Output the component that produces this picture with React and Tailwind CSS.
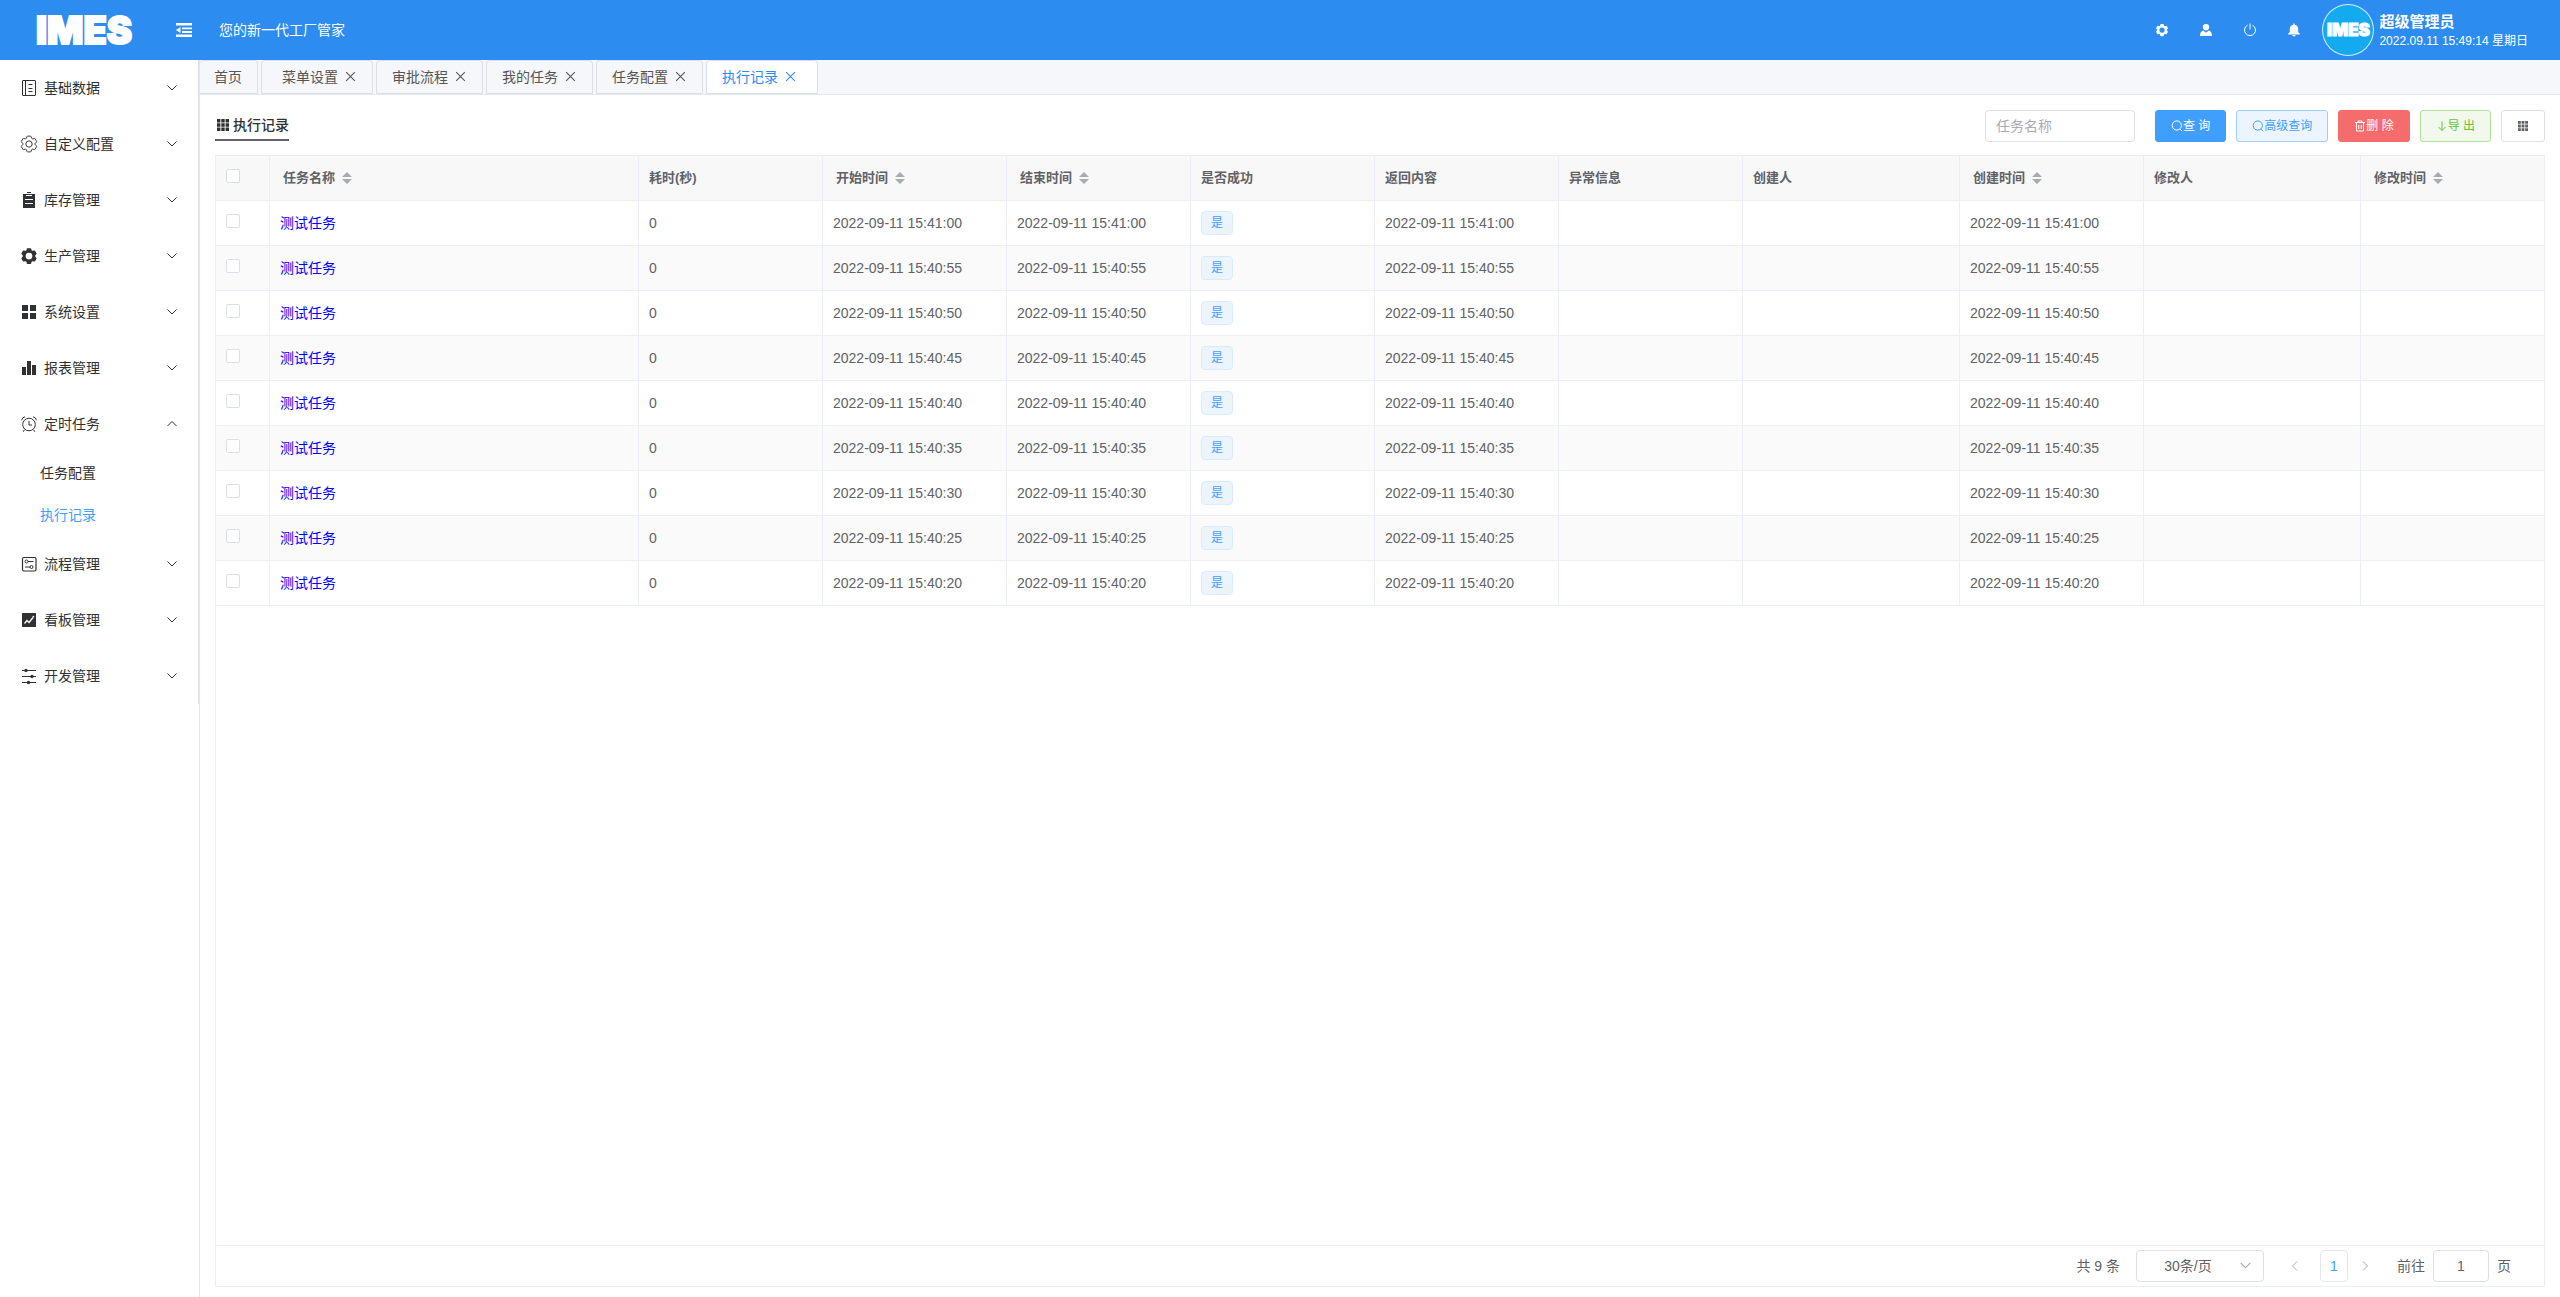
import { useState } from 'react';

// ─── Static data ──────────────────────────────────────────────────────────────
const MENU = [
  { label: '基础数据', icon: 'notebook' },
  { label: '自定义配置', icon: 'setting' },
  { label: '库存管理', icon: 'order' },
  { label: '生产管理', icon: 'tools' },
  { label: '系统设置', icon: 'grid' },
  { label: '报表管理', icon: 'data' },
  { label: '定时任务', icon: 'alarm', children: ['任务配置', '执行记录'] },
  { label: '流程管理', icon: 'process' },
  { label: '看板管理', icon: 'marketing' },
  { label: '开发管理', icon: 'operation' },
];

const TABS = [
  { label: '首页', pad: 'pl-[14px] pr-[15px]' },
  { label: '菜单设置', pad: 'pl-5 pr-[15px]', closable: true },
  { label: '审批流程', pad: 'pl-[15px] pr-[15px]', closable: true },
  { label: '我的任务', pad: 'pl-[15px] pr-[15px]', closable: true },
  { label: '任务配置', pad: 'pl-[15px] pr-[15px]', closable: true },
  { label: '执行记录', pad: 'pl-[15px] pr-5', closable: true },
];

const COLUMNS = [
  { key: 'name', label: '任务名称', width: 'w-[369px]', sortable: true },
  { key: 'cost', label: '耗时(秒)', width: 'w-[184px]' },
  { key: 'start', label: '开始时间', width: 'w-[184px]', sortable: true },
  { key: 'end', label: '结束时间', width: 'w-[184px]', sortable: true },
  { key: 'success', label: '是否成功', width: 'w-[184px]' },
  { key: 'result', label: '返回内容', width: 'w-[184px]' },
  { key: 'error', label: '异常信息', width: 'w-[184px]' },
  { key: 'creator', label: '创建人', width: 'w-[217px]' },
  { key: 'created', label: '创建时间', width: 'w-[184px]', sortable: true },
  { key: 'editor', label: '修改人', width: 'w-[217px]' },
  { key: 'edited', label: '修改时间', width: 'w-[184px]', sortable: true },
];

const ROWS = ['41:00', '40:55', '40:50', '40:45', '40:40', '40:35', '40:30', '40:25', '40:20'].map((t) => {
  const time = `2022-09-11 15:${t}`;
  return { name: '测试任务', cost: 0, start: time, end: time, success: '是', result: time, created: time };
});

// ─── Icons ────────────────────────────────────────────────────────────────────
const GEAR_OUTER =
  'M600.704 64a32 32 0 0 1 30.464 22.208l35.2 109.376c14.784 7.232 28.928 15.36 42.432 24.512l112.384-24.192a32 32 0 0 1 34.432 15.36L944.32 364.8a32 32 0 0 1-4.032 37.504l-77.12 85.12a357.12 357.12 0 0 1 0 49.024l77.12 85.248a32 32 0 0 1 4.032 37.504l-88.704 153.6a32 32 0 0 1-34.432 15.296L708.8 803.904c-13.44 9.088-27.648 17.28-42.368 24.512l-35.264 109.376A32 32 0 0 1 600.704 960H423.296a32 32 0 0 1-30.464-22.208L357.696 828.48a351.616 351.616 0 0 1-42.56-24.64l-112.32 24.256a32 32 0 0 1-34.432-15.36L79.68 659.2a32 32 0 0 1 4.032-37.504l77.12-85.248a357.12 357.12 0 0 1 0-48.896l-77.12-85.248A32 32 0 0 1 79.68 364.8l88.704-153.6a32 32 0 0 1 34.432-15.296l112.32 24.256c13.568-9.152 27.776-17.408 42.56-24.64l35.2-109.312A32 32 0 0 1 423.232 64H600.64z';

function Gear({ className, solid }) {
  return (
    <svg viewBox="0 0 1024 1024" className={className}>
      {solid ? (
        <path fill="currentColor" fillRule="evenodd" d={`${GEAR_OUTER}M512 320a192 192 0 1 1 0 384 192 192 0 0 1 0-384z`} />
      ) : (
        <g fill="none" stroke="currentColor" strokeWidth="54">
          <path d={GEAR_OUTER} />
          <circle cx="512" cy="512" r="180" />
        </g>
      )}
    </svg>
  );
}

const MENU_ICONS = {
  notebook: (
    <g fill="none" stroke="currentColor">
      <rect x="2.5" y="1.5" width="13" height="15" rx="0.5" />
      <path d="M5.5 1.5v15M8.500 5.500h4M8.500 9.500h4M8.500 12.500h4" />
    </g>
  ),
  order: (
    <path
      fill="currentColor"
      fillRule="evenodd"
      d="M3 3h3v2h6V3h3v14H3zM7 1h4v1H7zM6 3h6v1H6zM5 8v1h8V8zM5 12v1h8v-1z"
    />
  ),
  grid: <path fill="currentColor" d="M2 2h6v6H2zM10 2h6v6h-6zM2 10h6v6H2zM10 10h6v6h-6z" />,
  data: <path fill="currentColor" d="M2 8h4v8H2zM7 2h4v14H7zM12 6h4v10h-4z" />,
  alarm: (
    <g fill="none" stroke="currentColor">
      <circle cx="9" cy="9.5" r="6.3" />
      <path d="M9 6v4h3M4.500 14.800l-1.300 2M13.500 14.800l1.300 2M1.600 5.200Q2 2.400 5 1.800M16.400 5.200Q16 2.400 13 1.800" />
    </g>
  ),
  process: (
    <g fill="none" stroke="currentColor">
      <rect x="2.5" y="2.500" width="13.500" height="13.500" rx="1.500" strokeWidth="1.2" />
      <circle cx="6.500" cy="6.500" r="1.500" />
      <circle cx="11.500" cy="12" r="1.500" />
      <path d="M8 6.500h5.500M5 12h5" />
    </g>
  ),
  marketing: (
    <>
      <rect x="2" y="2" width="14" height="14" rx="0.5" fill="currentColor" />
      <path d="M4.500 12.500l2.500-3 2 2 4-5" fill="none" stroke="#fff" strokeWidth="1.3" />
      <circle cx="13.4" cy="5.600" r="0.9" fill="#fff" />
    </>
  ),
  operation: (
    <g fill="currentColor">
      <path d="M2 3h14v1H2zM2 9h14v1H2zM2 15h14v1H2z" />
      <circle cx="6" cy="3.500" r="1.700" />
      <circle cx="12" cy="9.500" r="1.700" />
      <circle cx="8.500" cy="15.500" r="1.700" />
    </g>
  ),
};

function MenuIcon({ name }) {
  if (name === 'setting' || name === 'tools') {
    return <Gear className="size-[18px]" solid={name === 'tools'} />;
  }
  return <svg viewBox="0 0 18 18" className="size-[18px]">{MENU_ICONS[name]}</svg>;
}

function Chevron({ d, className = 'size-3' }) {
  return (
    <svg viewBox="0 0 12 12" className={className}>
      <path d={d} fill="none" stroke="currentColor" />
    </svg>
  );
}

function GridIcon({ className }) {
  return (
    <svg viewBox="0 0 12 12" className={className}>
      <path
        fill="currentColor"
        d="M0 0h3.400v3.400H0zM4.300 0h3.400v3.400H4.300zM8.600 0H12v3.400H8.600zM0 4.300h3.400v3.400H0zM4.300 4.300h3.400v3.400H4.300zM8.600 4.300H12v3.400H8.600zM0 8.600h3.400V12H0zM4.300 8.600h3.400V12H4.300zM8.600 8.600H12V12H8.600z"
      />
    </svg>
  );
}

function SearchIcon() {
  return (
    <svg viewBox="0 0 12 12" className="size-3" fill="none" stroke="currentColor">
      <circle cx="5.800" cy="5.500" r="4.600" />
      <path d="M9 9l2 2.300" />
    </svg>
  );
}

// ─── Header ───────────────────────────────────────────────────────────────────
function Header() {
  return (
    <header className="flex h-[60px] shrink-0 items-center bg-[#2d8cf0] text-white">
      <div className="w-[175px] pl-9 font-['Inter',sans-serif] text-[38px] leading-none font-black [-webkit-text-stroke:2px_white]">
        IMES
      </div>
      <button type="button" aria-label="收起菜单">
        <svg viewBox="0 0 18 16" className="h-4 w-[18px]" fill="currentColor">
          <path d="M1 1h16v2.400H1zM7 5.400h10v1.900H7zM7 9h10v1.900H7zM1 12.600h16V15H1zM1 8.100l4.500-3v6z" />
        </svg>
      </button>
      <span className="ml-[26px] text-sm">您的新一代工厂管家</span>

      <div className="ml-auto flex items-center pr-8">
        <button type="button" aria-label="设置" className="flex w-11 justify-center">
          <Gear solid className="size-[14px]" />
        </button>
        <button type="button" aria-label="用户" className="flex w-11 justify-center">
          <svg viewBox="0 0 14 14" className="size-[14px]" fill="currentColor">
            <path d="M7 1a3.200 3.200 0 0 1 3.200 3.200C10.200 6 8.800 7.600 7 7.600S3.800 6 3.800 4.200A3.200 3.200 0 0 1 7 1zM4.300 7.600L7 9.800l2.700-2.200c2.200.6 3.300 2.400 3.300 5.400H1c0-3 1.100-4.800 3.300-5.400z" />
          </svg>
        </button>
        <button type="button" aria-label="退出" className="flex w-11 justify-center">
          <svg viewBox="0 0 14 14" className="size-[14px]" fill="none" stroke="currentColor">
            <path d="M4.500 2.200a5.500 5.500 0 1 0 5 0M7 .5v6" />
          </svg>
        </button>
        <button type="button" aria-label="通知" className="flex w-11 justify-center">
          <svg viewBox="0 0 14 14" className="size-[14px]" fill="currentColor">
            <path d="M6.300.5h1.400v1.200c2.200.4 3.500 2 3.500 4.300v3.200l1.600 1.300v.9H1.200v-.9l1.600-1.300V6c0-2.300 1.300-3.900 3.500-4.300zM5.200 12.100h3.600c-.2.9-.9 1.400-1.800 1.400s-1.600-.5-1.800-1.400z" />
          </svg>
        </button>
        <div className="ml-[6px] flex size-[52px] items-center justify-center rounded-full border border-white/80 bg-[#14aaf0] font-['Inter',sans-serif] text-[17px] leading-none font-black [-webkit-text-stroke:1px_white]">
          IMES
        </div>
        <div className="ml-[5px]">
          <p className="pt-px text-[15px] leading-5 font-bold">超级管理员</p>
          <p className="text-xs leading-[18px]">2022.09.11 15:49:14 星期日</p>
        </div>
      </div>
    </header>
  );
}

// ─── Sidebar ──────────────────────────────────────────────────────────────────
function Sidebar() {
  return (
    <aside className="w-[200px] shrink-0 border-r border-[#e6e6e6]">
      <nav className="border-r border-[#dcdfe6] text-sm text-[#303133]">
        {MENU.map((item) => (
          <div key={item.label}>
            <button type="button" className="flex h-14 w-full items-center pr-5 pl-5">
              <MenuIcon name={item.icon} />
              <span className="ml-[6px]">{item.label}</span>
              <span className="ml-auto">
                <Chevron d={item.children ? 'M1.500 8L6 3.500 10.500 8' : 'M1.500 3.500L6 8l4.500-4.500'} />
              </span>
            </button>
            {item.children?.map((child) => (
              <a
                key={child}
                href="#"
                className={`flex h-[42px] items-center pl-10 ${child === '执行记录' ? 'text-[#409eff]' : ''}`}
              >
                {child}
              </a>
            ))}
          </div>
        ))}
      </nav>
    </aside>
  );
}

// ─── Tab bar ──────────────────────────────────────────────────────────────────
function TabBar() {
  const [active, setActive] = useState('执行记录');
  return (
    <div className="flex h-[35px] gap-[3px] border-b border-[#e4e7ed] bg-[#f5f7fa] text-sm">
      {TABS.map((tab) => (
        <div
          key={tab.label}
          className={`flex h-[34px] items-center rounded-t border border-[#dcdfe6] first:border-l-0 ${tab.pad} ${
            active === tab.label ? 'bg-white text-[#2d8cf0]' : 'text-[#555]'
          }`}
        >
          <button type="button" onClick={() => setActive(tab.label)}>{tab.label}</button>
          {tab.closable && (
            <button type="button" aria-label={`关闭${tab.label}`} className="ml-[6px] pb-[2px]">
              <Chevron d="M2 2l8 8M10 2l-8 8" className="size-[13px]" />
            </button>
          )}
        </div>
      ))}
    </div>
  );
}

// ─── Toolbar ──────────────────────────────────────────────────────────────────
function ToolButton({ className, children, ...rest }) {
  return (
    <button
      type="button"
      className={`flex h-8 items-center justify-center rounded-[3px] border px-[15px] text-xs ${className}`}
      {...rest}
    >
      {children}
    </button>
  );
}

function Toolbar() {
  return (
    <div className="mb-[13px] flex items-start">
      <h1 className="flex h-[31px] items-center gap-1 border-b-2 border-[#606266] pl-[2px] text-sm font-medium text-[#303133]">
        <GridIcon className="size-3" />
        执行记录
      </h1>
      <div className="ml-auto flex gap-[10px]">
        <input
          type="text"
          aria-label="任务名称"
          placeholder="任务名称"
          className="mr-[10px] h-8 w-[150px] rounded border border-[#dcdfe6] px-[10px] text-sm text-[#606266] placeholder:text-[#a8abb2]"
        />
        <ToolButton className="border-[#409eff] bg-[#409eff] text-white">
          <SearchIcon />查 询
        </ToolButton>
        <ToolButton className="border-[#a0cfff] bg-[#ecf5ff] text-[#409eff]">
          <SearchIcon />高级查询
        </ToolButton>
        <ToolButton className="border-[#f56c6c] bg-[#f56c6c] text-white">
          <svg viewBox="0 0 12 12" className="size-3" fill="none" stroke="currentColor">
            <path d="M1 2.500h10M4 2.500v-1.500h4v1.500M2.500 2.500v8.500h7V2.500M4.800 5v4M7.200 5v4" />
          </svg>
          删 除
        </ToolButton>
        <ToolButton className="border-[#b3e19d] bg-[#f0f9eb] text-[#67c23a]">
          <svg viewBox="0 0 12 12" className="size-3" fill="none" stroke="currentColor">
            <path d="M6 1.500v9M2.500 7L6 10.500 9.500 7" />
          </svg>
          导 出
        </ToolButton>
        <ToolButton className="border-[#dcdfe6] bg-white text-[#606266]" aria-label="列设置">
          <span className="flex w-3 justify-center"><GridIcon className="size-[10px]" /></span>
        </ToolButton>
      </div>
    </div>
  );
}

// ─── Table ────────────────────────────────────────────────────────────────────
function Checkbox({ label }) {
  return (
    <input
      type="checkbox"
      aria-label={label}
      className="mb-1 block size-[14px] appearance-none rounded-[2px] border border-[#dcdfe6] bg-white checked:bg-[#409eff]"
    />
  );
}

function Cell({ column, row }) {
  if (column === 'name') {
    return <a href="#" className="text-[#0000ff]">{row.name}</a>;
  }
  if (column === 'success') {
    return (
      <span className="inline-flex h-6 items-center rounded border border-[#d9ecff] bg-[#ecf5ff] px-[9px] align-middle text-xs text-[#409eff]">
        {row.success}
      </span>
    );
  }
  return row[column];
}

const CELL = 'h-[45px] border-r border-b border-[#ebeef5] px-[10px] py-0';

function RecordTable() {
  return (
    <table className="w-full table-fixed border-separate border-spacing-0 text-left text-sm text-[#606266]">
      <thead className="bg-[#f8f8f9] text-[13px]">
        <tr>
          <th className={`${CELL} w-[54px]`}><Checkbox label="全选" /></th>
          {COLUMNS.map((col) => (
            <th key={col.key} className={`${CELL} ${col.width} font-bold`}>
              {col.sortable ? (
                <button type="button" className="flex items-center pl-[3px]">
                  {col.label}
                  <svg viewBox="0 0 10 12" className="mx-[7px] h-3 w-[10px] fill-[#a8abb2]">
                    <path d="M0 5L5 0l5 5zM0 7l5 5 5-5z" />
                  </svg>
                </button>
              ) : (
                col.label
              )}
            </th>
          ))}
        </tr>
      </thead>
      <tbody>
        {ROWS.map((row) => (
          <tr key={row.start} className="even:bg-[#fafafa]">
            <td className={CELL}><Checkbox label={row.start} /></td>
            {COLUMNS.map((col) => (
              <td key={col.key} className={CELL}><Cell column={col.key} row={row} /></td>
            ))}
          </tr>
        ))}
      </tbody>
    </table>
  );
}

// ─── Pagination ───────────────────────────────────────────────────────────────
function Pagination() {
  return (
    <div className="flex h-[41px] items-center justify-end border-t border-r border-[#ebeef5] pr-[33px] text-sm text-[#606266]">
      <span>共 9 条</span>
      <div className="relative ml-4">
        <select
          aria-label="每页条数"
          className="block h-8 w-32 appearance-none rounded border border-[#dcdfe6] bg-white pr-8 pl-2 text-center [text-align-last:center]"
        >
          <option>30条/页</option>
          <option>50条/页</option>
        </select>
        <Chevron
          d="M1.500 3.500L6 8l4.500-4.500"
          className="pointer-events-none absolute top-[9px] right-3 size-[13px] text-[#a8abb2]"
        />
      </div>
      <button type="button" aria-label="上一页" className="ml-[25px] text-[#a8abb2]">
        <Chevron d="M8 1.500L3.500 6 8 10.500" />
      </button>
      <button type="button" className="ml-[19px] h-8 w-7 rounded border border-[#e4e7ed] text-[#409eff]">1</button>
      <button type="button" aria-label="下一页" className="ml-[11px] text-[#a8abb2]">
        <Chevron d="M4 1.500L8.500 6 4 10.500" />
      </button>
      <label htmlFor="page-jump" className="mr-2 ml-[26px]">前往</label>
      <input
        id="page-jump"
        type="text"
        defaultValue="1"
        className="mr-2 h-8 w-14 rounded border border-[#dcdfe6] text-center"
      />
      <span>页</span>
    </div>
  );
}

// ─── App ──────────────────────────────────────────────────────────────────────
export default function App() {
  return (
    <div className="flex min-h-screen flex-col bg-white font-['Liberation_Sans','Noto_Sans_CJK_SC',sans-serif]">
      <Header />
      <div className="flex flex-1">
        <Sidebar />
        <main className="flex min-w-0 flex-1 flex-col">
          <TabBar />
          <section className="flex flex-1 flex-col px-[15px] pt-[15px] pb-[10px]">
            <Toolbar />
            <div className="flex flex-1 flex-col border-t border-b border-l border-[#ebeef5]">
              <div className="flex-1 border-r border-[#ebeef5]">
                <div className="-mr-px"><RecordTable /></div>
              </div>
              <Pagination />
            </div>
          </section>
        </main>
      </div>
    </div>
  );
}
